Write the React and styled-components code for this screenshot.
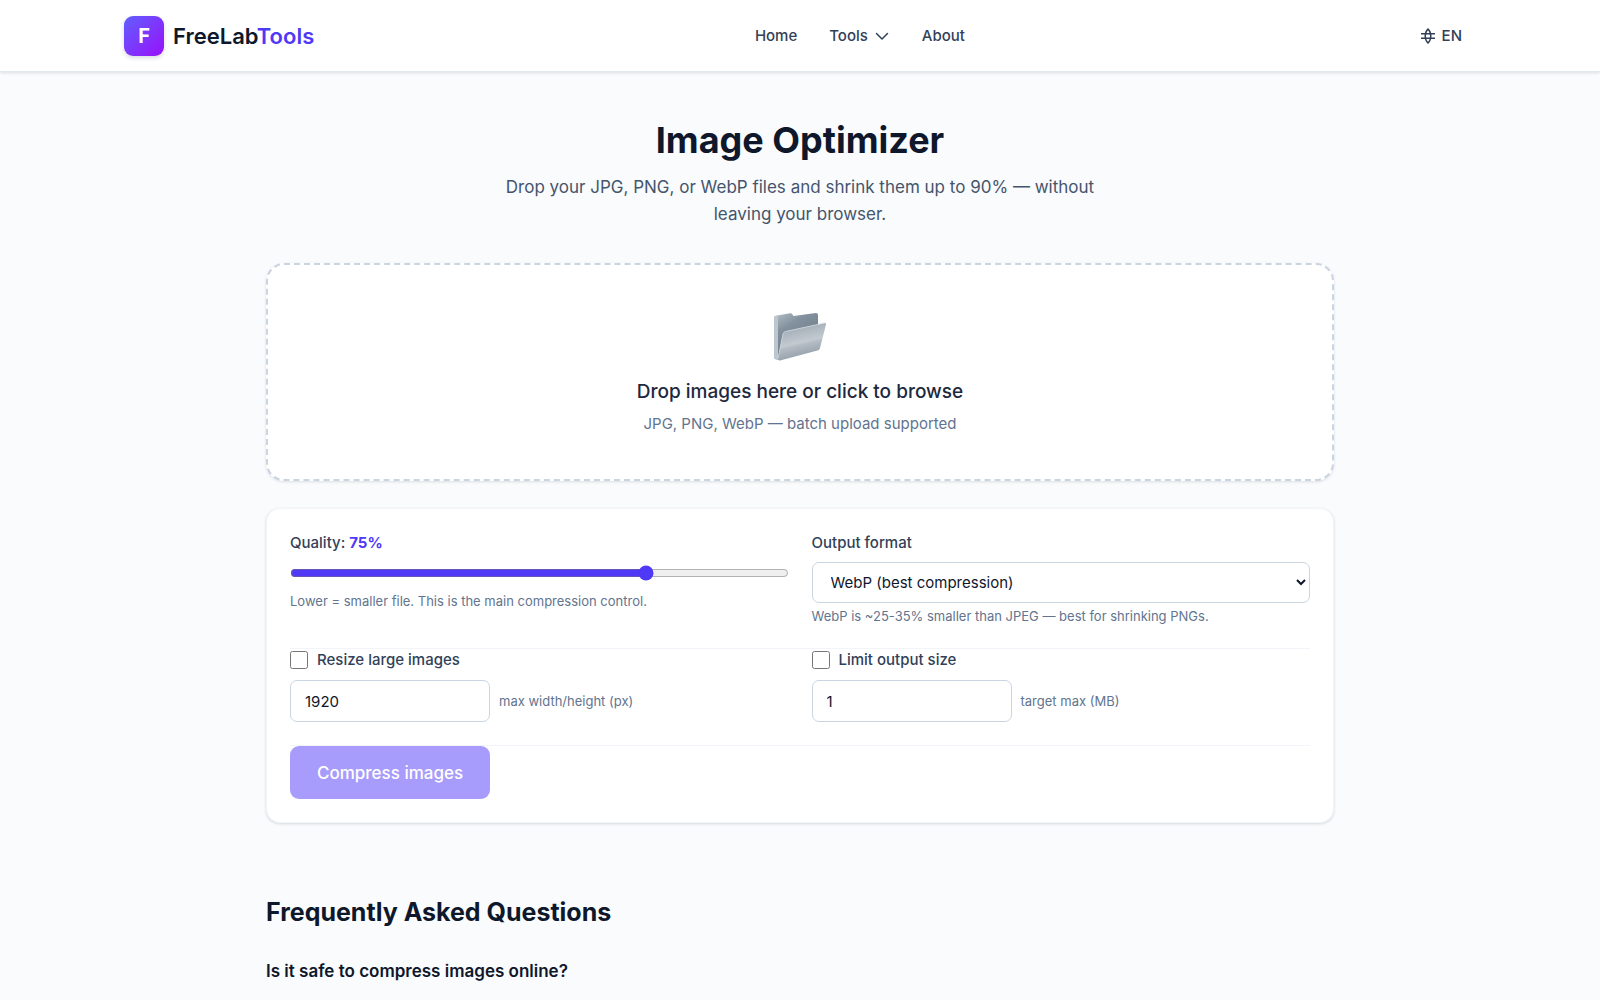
import React, { useState } from "react";
import styled, { createGlobalStyle } from "styled-components";

const GlobalStyle = createGlobalStyle`
  * {
    box-sizing: border-box;
  }
  body {
    margin: 0;
    background-color: #f9fbfd;
    color: #0f172b;
    font-family: 'Inter', sans-serif;
    font-size: 16px;
    line-height: 24px;
  }
  h1, h2, h3, p {
    margin: 0;
  }
  button, input, select {
    font: inherit;
    color: inherit;
  }`

const Header = styled.header`
  background-color: #ffffff;
  border-bottom: 1px solid #e2e8f0;
  box-shadow: 0 1px 3px rgba(15, 23, 43, 0.12);`

const HeaderInner = styled.div`
  max-width: 1352px;
  height: 71px;
  margin: 0 auto;
  display: flex;
  align-items: center;
  justify-content: space-between;`

const Brand = styled.a`
  display: flex;
  align-items: center;
  gap: 9px;
  color: #0f172b;
  font-size: 22px;
  font-weight: 600;
  text-decoration: none;`

const BrandMark = styled.span`
  width: 40px;
  height: 40px;
  display: flex;
  align-items: center;
  justify-content: center;
  border-radius: 9px;
  background: linear-gradient(135deg, #615fff, #9810fa);
  box-shadow: 0 2px 4px rgba(15, 23, 43, 0.16);
  color: #ffffff;
  font-size: 20px;
  font-weight: 700;`

const BrandAccent = styled.span`
  color: #4f39f6;`

const Nav = styled.nav`
  display: flex;
  align-items: center;
  gap: 32px;`

const NavLink = styled.a`
  color: #314158;
  font-size: 15px;
  font-weight: 500;
  text-decoration: none;`

const NavButton = styled.button`
  display: flex;
  align-items: center;
  gap: 6px;
  padding: 0;
  border: none;
  background: none;
  color: #314158;
  font-size: 15px;
  font-weight: 500;`

const LangButton = styled(NavButton)`
  padding: 0 14px;`

const Main = styled.main`
  max-width: 1068px;
  margin: 0 auto;
  padding: 44px 0;`

const Intro = styled.div`
  display: flex;
  flex-direction: column;
  align-items: center;
  gap: 10px;
  text-align: center;`

const Title = styled.h1`
  font-size: 36px;
  line-height: 48px;
  font-weight: 700;`

const Lead = styled.p`
  max-width: 620px;
  color: #45556c;
  font-size: 17px;
  line-height: 27px;`

const DropZone = styled.button`
  width: 100%;
  margin-top: 35px;
  padding: 47px 24px 43px;
  display: flex;
  flex-direction: column;
  align-items: center;
  border: 2px dashed #cad5e2;
  border-radius: 18px;
  background-color: #ffffff;
  box-shadow: 0 1px 3px rgba(15, 23, 43, 0.12);`

const DropTitle = styled.span`
  margin-top: 15px;
  color: #1d293d;
  font-size: 19px;
  line-height: 30px;
  font-weight: 500;`

const DropHint = styled.span`
  margin-top: 5px;
  color: #62748e;
  font-size: 15px;
  line-height: 24px;`

const Card = styled.form`
  margin-top: 27px;
  padding: 23px;
  border: 1px solid #f1f5f9;
  border-radius: 14px;
  background-color: #ffffff;
  box-shadow: 0 1px 3px rgba(15, 23, 43, 0.14);`

const Columns = styled.div`
  display: grid;
  grid-template-columns: 1fr 1fr;
  gap: 23px;
  padding-bottom: 23px;
  border-bottom: 1px solid #f1f5f9;`

const Field = styled.div`
  display: flex;
  flex-direction: column;`

const Label = styled.label`
  color: #314158;
  font-size: 15px;
  line-height: 22px;
  font-weight: 500;`

const Percent = styled.span`
  color: #4f39f6;
  font-weight: 700;`

const Slider = styled.input`
  width: 100%;
  height: 18px;
  margin: 10px 0;
  accent-color: #4f39f6;`

const Select = styled.select`
  width: 100%;
  height: 41px;
  margin: 8px 0 4px;
  padding: 0 14px;
  border: 1px solid #cad5e2;
  border-radius: 7px;
  background-color: #ffffff;
  font-size: 15px;`

const Hint = styled.span`
  color: #62748e;
  font-size: 13px;
  line-height: 18px;`

const CheckRow = styled.div`
  display: flex;
  align-items: center;
  gap: 9px;`

const Checkbox = styled.input`
  width: 18px;
  height: 18px;
  margin: 0;
  accent-color: #4f39f6;`

const InputRow = styled.div`
  margin-top: 9px;
  display: flex;
  align-items: center;
  gap: 9px;`

const NumberInput = styled.input`
  width: 200px;
  height: 42px;
  padding: 0 14px;
  border: 1px solid #cad5e2;
  border-radius: 7px;
  background-color: #ffffff;
  font-size: 15px;`

const Submit = styled.button`
  height: 53px;
  padding: 0 27px;
  display: block;
  border: none;
  border-radius: 9px;
  background-color: #a79cfb;
  color: #ffffff;
  font-size: 17px;
  font-weight: 500;`

const Faq = styled.section`
  margin-top: 71px;`

const FaqTitle = styled.h2`
  font-size: 25px;
  line-height: 36px;
  font-weight: 700;`

const Question = styled.h3`
  margin-top: 27px;
  font-size: 17px;
  line-height: 28px;
  font-weight: 600;`

const Answer = styled.p`
  margin-top: 9px;
  color: #45556c;
  font-size: 17px;
  line-height: 29px;`

function ChevronIcon() {
  return (
    <svg width="16" height="16" viewBox="0 0 16 16" fill="none" stroke="currentColor" strokeWidth="1.5" strokeLinecap="round" strokeLinejoin="round">
      <path d="M2.500 5.500 8 11l5.500-5.500" />
    </svg>
  );
}

function GlobeIcon() {
  return (
    <svg width="16" height="16" viewBox="0 0 16 16" fill="none" stroke="currentColor" strokeWidth="1.500">
      <path d="M1 5.700h14M1 10.300h14" />
      <path d="M8 1C4.300 4.500 4.300 11.500 8 15 11.700 11.500 11.700 4.500 8 1Z" />
    </svg>
  );
}

function FolderIcon() {
  return (
    <svg width="54" height="50" viewBox="0 0 54 50">
      <defs>
        <linearGradient id="folderBack" x1="0" y1="0" x2="0.6" y2="1">
          <stop offset="0" stopColor="#b4c0c9" />
          <stop offset="0.35" stopColor="#82919d" />
          <stop offset="1" stopColor="#667783" />
        </linearGradient>
        <linearGradient id="folderFront" x1="0.2" y1="0" x2="0.5" y2="1">
          <stop offset="0" stopColor="#98a4af" />
          <stop offset="0.55" stopColor="#c3cad0" />
          <stop offset="0.62" stopColor="#b3bbc3" />
          <stop offset="1" stopColor="#8d99a4" />
        </linearGradient>
      </defs>
      <path d="M1 6Q1 4 3 3.700L17 1.200Q19 1 19.500 2.500L20.500 4 43 1Q45 1 45 3V34L5 47.500Q1.500 48 1 45Z" fill="url(#folderBack)" />
      <path d="M1 6Q1 4 3 3.700L5 3.400V47.500Q1.500 48 1 45Z" fill="#bcc6ce" />
      <path d="M12.500 19.500 51.500 11Q53.500 10.500 53 12.500L47 36Q46.500 38 44.500 38.500L7 48.500Q4.500 49 5 46.500L10 22Q10.500 20 12.500 19.500Z" fill="url(#folderFront)" />
      <path d="M5 46.500 10 22Q10.500 20 12.500 19.500L51.500 11" fill="none" stroke="#d5dce1" strokeWidth="0.800" />
    </svg>
  );
}

export default function App() {
  const [quality, setQuality] = useState(75);

  return (
    <>
      <GlobalStyle />
      <Header>
        <HeaderInner>
          <Brand href="#">
            <BrandMark>F</BrandMark>
            <span>FreeLab<BrandAccent>Tools</BrandAccent></span>
          </Brand>
          <Nav>
            <NavLink href="#">Home</NavLink>
            <NavButton type="button">Tools <ChevronIcon /></NavButton>
            <NavLink href="#">About</NavLink>
          </Nav>
          <LangButton type="button"><GlobeIcon /> EN</LangButton>
        </HeaderInner>
      </Header>

      <Main>
        <Intro>
          <Title>Image Optimizer</Title>
          <Lead>Drop your JPG, PNG, or WebP files and shrink them up to 90% — without leaving your browser.</Lead>
        </Intro>

        <DropZone type="button">
          <FolderIcon />
          <DropTitle>Drop images here or click to browse</DropTitle>
          <DropHint>JPG, PNG, WebP — batch upload supported</DropHint>
        </DropZone>

        <Card>
          <Columns>
            <Field>
              <Label htmlFor="quality">Quality: <Percent>{quality}%</Percent></Label>
              <Slider id="quality" type="range" min="10" max="100" value={quality} onChange={(e) => setQuality(e.target.value)} />
              <Hint>Lower = smaller file. This is the main compression control.</Hint>
            </Field>
            <Field>
              <Label htmlFor="format">Output format</Label>
              <Select id="format" defaultValue="webp">
                <option value="webp">WebP (best compression)</option>
              </Select>
              <Hint>WebP is ~25-35% smaller than JPEG — best for shrinking PNGs.</Hint>
            </Field>
          </Columns>

          <Columns>
            <Field>
              <CheckRow>
                <Checkbox id="resize" type="checkbox" />
                <Label htmlFor="resize">Resize large images</Label>
              </CheckRow>
              <InputRow>
                <NumberInput id="maxSide" type="text" inputMode="numeric" defaultValue="1920" />
                <Hint as="label" htmlFor="maxSide">max width/height (px)</Hint>
              </InputRow>
            </Field>
            <Field>
              <CheckRow>
                <Checkbox id="limit" type="checkbox" />
                <Label htmlFor="limit">Limit output size</Label>
              </CheckRow>
              <InputRow>
                <NumberInput id="maxMb" type="text" inputMode="numeric" defaultValue="1" />
                <Hint as="label" htmlFor="maxMb">target max (MB)</Hint>
              </InputRow>
            </Field>
          </Columns>

          <Submit type="button">Compress images</Submit>
        </Card>

        <Faq>
          <FaqTitle>Frequently Asked Questions</FaqTitle>
          <Question>Is it safe to compress images online?</Question>
          <Answer>Yes — FreeLabTools runs in your browser, so images are never sent to a server and stay on your own device at all times.</Answer>
        </Faq>
      </Main>
    </>
  );
}
